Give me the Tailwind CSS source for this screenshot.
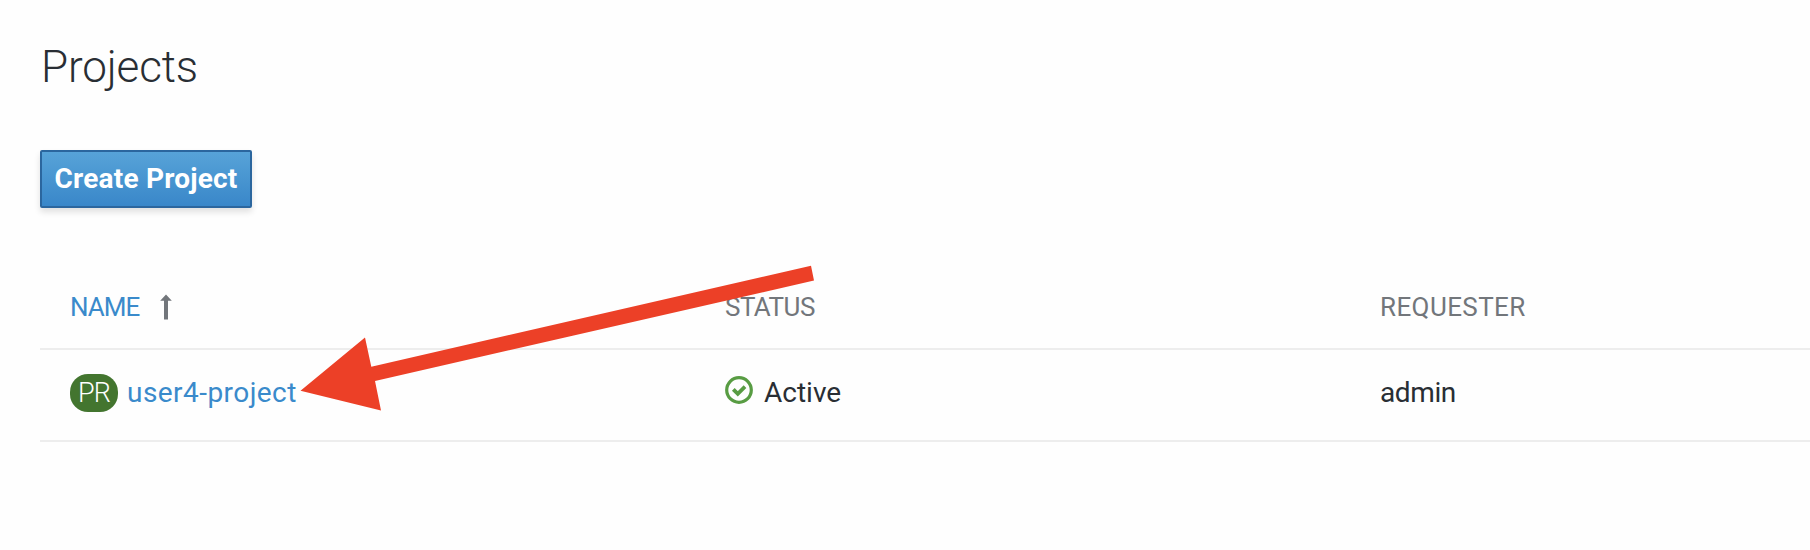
<!DOCTYPE html>
<html lang="en">
<head>
<meta charset="utf-8">
<title>Projects</title>
<script src="https://cdn.jsdelivr.net/npm/@tailwindcss/browser@4"></script>
</head>
<body class="relative h-[550px] overflow-hidden bg-[#fefefe] font-['Roboto',sans-serif] text-[#292e34]">
<main class="pl-10">
  <header class="flex h-[150px] items-start pt-[41px] pl-px">
    <h1 class="text-[44px] leading-[52px] font-light tracking-[-0.15px]">Projects</h1>
  </header>
  <button class="flex h-[58px] w-[212px] items-center justify-center rounded-[2px] border-2 border-[#2b669e] bg-linear-to-b from-[#57a3d8] to-[#3987c9] shadow-[0_4px_6px_rgba(3,3,3,0.12)]">
    <span class="text-[28px] leading-none font-bold whitespace-nowrap text-white tracking-[0.2px]">Create Project</span>
  </button>
  <section class="mt-[58px]">
    <div class="grid h-[84px] grid-cols-[655px_655px_1fr] border-b-2 border-[#ededed] pl-[30px] text-[26px] leading-[30px] text-[#72767b]">
      <div class="flex pt-[26px] text-[#3a8acb]">
        <span class="w-[70px] tracking-[-1px]">NAME</span>
        <svg class="mt-[2px] ml-5" width="12" height="26" viewBox="0 0 12 26"><path d="M6 0.5 11.8 6.8H8V25.5H4V6.8H0.2Z" fill="#72767b"/></svg>
      </div>
      <div class="pt-[26px] tracking-[-0.55px]"><span>STATUS</span></div>
      <div class="pt-[26px] tracking-[0.4px]"><span>REQUESTER</span></div>
    </div>
    <div class="grid h-[92px] grid-cols-[655px_655px_1fr] border-b-2 border-[#ededed] pl-[30px] text-[28px] leading-[32px]">
      <div class="flex pt-6">
        <span class="flex h-[38px] w-12 items-center justify-center rounded-[18px] bg-[#43752f] text-[27px] font-light tracking-[-1px] text-white">PR</span>
        <a class="ml-[9px] pt-[3px] tracking-[0.45px] text-[#3a8acb]">user4-project</a>
      </div>
      <div class="flex pt-[26px]">
        <svg width="28" height="28" viewBox="0 0 28 28" fill="none" stroke="#589c43"><circle cx="14" cy="14" r="12.3" stroke-width="3.2"/><path d="M8.3 13.3 12.8 17.8 20 10.6" stroke-width="3.8"/></svg>
        <span class="ml-[11px] pt-px">Active</span>
      </div>
      <div class="pt-[27px] tracking-[-0.4px]"><span>admin</span></div>
    </div>
  </section>
</main>
<svg class="pointer-events-none absolute inset-0" width="1810" height="550" viewBox="0 0 1810 550"><path d="M300.5 390.7 365 337.5 371.3 366.7 811 265.7 814 280.5 375 381 381 410.5Z" fill="#ec4027"/></svg>
</body>
</html>
